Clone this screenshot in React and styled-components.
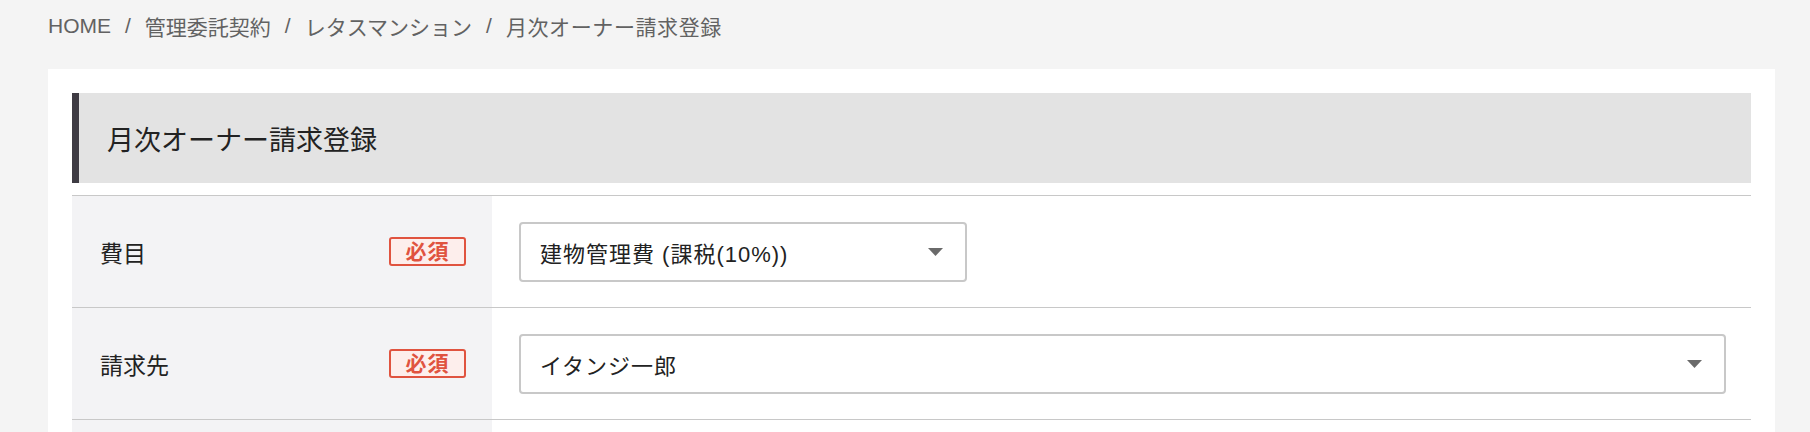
import React from 'react'
import styled, { createGlobalStyle } from 'styled-components'

const GlobalStyle = createGlobalStyle`
  body {
    margin: 0;
    background: #f4f4f4;
    font-family: "Liberation Sans", "Noto Sans CJK JP", sans-serif;
    color: #222;
  }
`

const Page = styled.div`
  padding: 0 35px 0 48px;
`

const Breadcrumb = styled.nav`
  display: flex;
  align-items: center;
  height: 52px;
  font-size: 21px;
  color: #626262;
`

const Crumb = styled.span`
  white-space: nowrap;
  letter-spacing: ${p => p.$last ? '0.6px' : '0'};
`

const Separator = styled.span`
  margin: 0 14px;
`

const Panel = styled.section`
  margin-top: 17px;
  background: #fff;
  padding: 24px 24px 0;
`

const Heading = styled.h1`
  display: flex;
  align-items: center;
  height: 90px;
  margin: 0 0 12px;
  padding-left: 28px;
  border-left: 7px solid #3e3b43;
  background: #e3e3e3;
  font-size: 27px;
  font-weight: normal;
  color: #222;
`

const Table = styled.div`
  border-top: 1px solid #c8c8c8;
`

const Row = styled.div`
  display: flex;
  height: 111px;
  border-bottom: 1px solid #c8c8c8;
`

const Label = styled.div`
  display: flex;
  align-items: center;
  justify-content: space-between;
  flex: 0 0 420px;
  box-sizing: border-box;
  padding: 0 26px 0 28px;
  background: #f3f3f5;
  font-size: 23px;
`

const Badge = styled.span`
  display: flex;
  align-items: center;
  justify-content: center;
  width: 77px;
  height: 29px;
  box-sizing: border-box;
  border: 2px solid #e0533f;
  border-radius: 3px;
  background: #fdeeec;
  color: #e0533f;
  font-size: 21px;
  line-height: 1;
  font-weight: bold;
  letter-spacing: 1px;
`

const Value = styled.div`
  display: flex;
  align-items: center;
  flex: 1;
  padding: 0 25px 0 27px;
`

const Select = styled.div`
  display: flex;
  align-items: center;
  justify-content: space-between;
  width: ${p => p.$full ? '100%' : '448px'};
  height: 60px;
  box-sizing: border-box;
  padding: 0 22px 0 19px;
  border: 2px solid #c8c8c8;
  border-radius: 4px;
  background: #fff;
  font-size: 22px;
  letter-spacing: 1px;
  color: #222;
`

const Arrow = () => (
  <svg width="15" height="8" viewBox="0 0 15 8">
    <path d="M0 0 L15 0 L7.5 8 Z" fill="#6a6a6a" />
  </svg>
)

const crumbs = ['HOME', '管理委託契約', 'レタスマンション', '月次オーナー請求登録']

export default function App() {
  return (
    <>
      <GlobalStyle />
      <Page>
        <Breadcrumb>
          {crumbs.map((c, i) => (
            <React.Fragment key={c}>
              {i > 0 && <Separator>/</Separator>}
              <Crumb $last={i === crumbs.length - 1}>{c}</Crumb>
            </React.Fragment>
          ))}
        </Breadcrumb>
        <Panel>
          <Heading>月次オーナー請求登録</Heading>
          <Table>
            <Row>
              <Label>
                費目
                <Badge>必須</Badge>
              </Label>
              <Value>
                <Select>
                  <span>建物管理費 (課税(10%))</span>
                  <Arrow />
                </Select>
              </Value>
            </Row>
            <Row>
              <Label>
                請求先
                <Badge>必須</Badge>
              </Label>
              <Value>
                <Select $full>
                  <span>イタンジ一郎</span>
                  <Arrow />
                </Select>
              </Value>
            </Row>
            <Row>
              <Label />
              <Value />
            </Row>
          </Table>
        </Panel>
      </Page>
    </>
  )
}
